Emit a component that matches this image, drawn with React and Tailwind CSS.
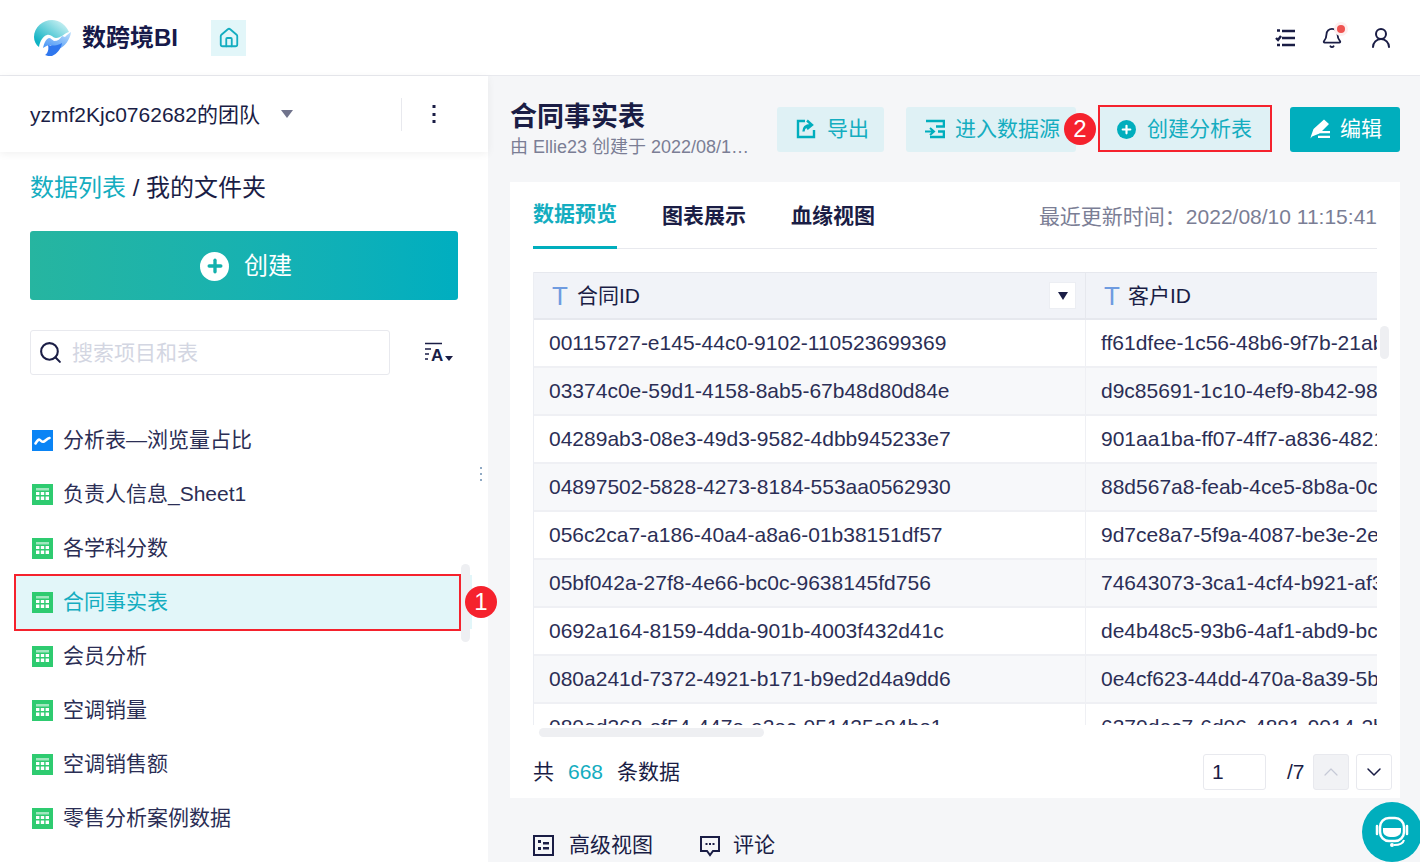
import React from "react";
import { Home, Bell, UserRound, Search, Plus, ChevronUp, ChevronDown } from "lucide-react";

const files = [
  { name: "分析表—浏览量占比", kind: "chart" },
  { name: "负责人信息_Sheet1" },
  { name: "各学科分数" },
  { name: "合同事实表", active: true },
  { name: "会员分析" },
  { name: "空调销量" },
  { name: "空调销售额" },
  { name: "零售分析案例数据" },
];

const rows = [
  ["00115727-e145-44c0-9102-110523699369", "ff61dfee-1c56-48b6-9f7b-21ab3c0e7d11"],
  ["03374c0e-59d1-4158-8ab5-67b48d80d84e", "d9c85691-1c10-4ef9-8b42-98a1c2e4f760"],
  ["04289ab3-08e3-49d3-9582-4dbb945233e7", "901aa1ba-ff07-4ff7-a836-4821d7c0be55"],
  ["04897502-5828-4273-8184-553aa0562930", "88d567a8-feab-4ce5-8b8a-0c6e13f2a9d4"],
  ["056c2ca7-a186-40a4-a8a6-01b38151df57", "9d7ce8a7-5f9a-4087-be3e-2e90b4a1c673"],
  ["05bf042a-27f8-4e66-bc0c-9638145fd756", "74643073-3ca1-4cf4-b921-af3d58e0c217"],
  ["0692a164-8159-4dda-901b-4003f432d41c", "de4b48c5-93b6-4af1-abd9-bc07e26f1a38"],
  ["080a241d-7372-4921-b171-b9ed2d4a9dd6", "0e4cf623-44dd-470a-8a39-5b1f7d92c6e0"],
  ["080ed368-ef54-447e-a2ec-051425c84be1", "6370dec7-6d06-4881-9014-2b8ea5c3d174"],
];

function Logo() {
  return (
    <svg width="40" height="38" viewBox="0 0 40 38" className="shrink-0">
      <defs>
        <linearGradient id="ball" x1="0.85" y1="0" x2="0.1" y2="0.8">
          <stop offset="0" stopColor="#d3f3f5" />
          <stop offset="1" stopColor="#0fb3c4" />
        </linearGradient>
        <linearGradient id="wave" x1="0.9" y1="0" x2="0.2" y2="1">
          <stop offset="0" stopColor="#b9dcfb" />
          <stop offset="1" stopColor="#4b97f6" />
        </linearGradient>
      </defs>
      <path d="M19 1C10 1 1 8 1 18c0 4 2 8 5 10 1-6 4-11 8-12 4-1 6 3 9 3 5 0 9-5 13-6C33 6 27 1 19 1Z" fill="url(#ball)" />
      <path d="M38 13c-2 1-4 3-6 5l-3-1c-2 3-4 5-8 5-2-1-3-3-5-3-3 1-5 5-6 10 3-2 5-3 8-3 1 3 4 4 8 4 6-3 11-9 12-17Z" fill="url(#wave)" />
      <path d="M15 26c4 1 9 1 14-2-1 6-5 11-10 13-3 0-5 0-7-1 3-2 4-6 3-10Z" fill="#2f77ee" />
    </svg>
  );
}

function TableIcon() {
  return (
    <svg width="21" height="21" viewBox="0 0 21 21" className="shrink-0">
      <rect width="21" height="21" fill="#2ecb70" />
      <rect x="4" y="4" width="13" height="2.5" fill="#fff" opacity="0.55" />
      <path d="M4 8h3.4v3H4zM8.8 8h3.4v3H8.8zM13.6 8H17v3h-3.4zM4 12.5h3.4V16H4zM8.8 12.5h3.4V16H8.8zM13.6 12.5H17V16h-3.4z" fill="#fff" />
    </svg>
  );
}

function ChartIcon() {
  return (
    <svg width="21" height="21" viewBox="0 0 21 21" className="shrink-0">
      <rect width="21" height="21" fill="#0a84f5" />
      <path d="M3.5 13.5c2-3 3-4.500 4.500-3.500s2 2.500 4 1.500 3-3 5.500-3.500" fill="none" stroke="#fff" strokeWidth="2.6" strokeLinecap="round" />
    </svg>
  );
}

function ActionButton({ icon, label, className }) {
  return (
    <button className={`flex h-[45px] items-center rounded-[3px] text-[21px] ${className}`}>
      {icon}
      {label}
    </button>
  );
}

function Sidebar() {
  return (
    <aside className="relative z-10 flex w-[488px] shrink-0 flex-col bg-white">
      <div className="flex h-[76px] shrink-0 items-center pl-[30px] shadow-[0_2px_8px_rgba(0,0,0,0.06)]">
        <span className="text-[21px] leading-none text-[#1a1d45]">yzmf2Kjc0762682的团队</span>
        <span className="ml-[21px] h-0 w-0 border-x-[6px] border-t-[8px] border-x-transparent border-t-[#70738c]" />
        <div className="ml-[108px] flex h-[33px] w-[66px] items-center justify-center border-l border-[#e8e9ee]">
          <svg width="4" height="18" viewBox="0 0 4 18" fill="#1a1d45">
            <rect x="0.5" y="0" width="3" height="3" />
            <rect x="0.5" y="8" width="3" height="3" />
            <rect x="0.5" y="15" width="3" height="3" />
          </svg>
        </div>
      </div>

      <div className="mt-[18px] px-[30px] text-[24px] leading-[36px] text-[#1a1d45]">
        <span className="text-[#14adc0]">数据列表</span> / 我的文件夹
      </div>

      <button className="mx-[30px] mt-[25px] flex h-[69px] w-[428px] items-center justify-center gap-[15px] rounded-[3px] bg-gradient-to-r from-[#26b5a0] to-[#00aec0] pl-[4px] pt-[1px] text-[24px] text-white">
        <span className="flex h-[29px] w-[29px] items-center justify-center rounded-full bg-white">
          <Plus size={20} strokeWidth={4} className="text-[#12b0ad]" />
        </span>
        创建
      </button>

      <div className="mt-[30px] flex items-center px-[30px]">
        <div className="flex h-[45px] w-[360px] items-center gap-[9px] rounded-[3px] border border-[#e8e9ee] pl-[7px]">
          <Search size={25} strokeWidth={2} className="text-[#1a1d45]" />
          <span className="text-[21px] text-[#d3d6e2]">搜索项目和表</span>
        </div>
        <svg width="30" height="22" viewBox="0 0 30 22" className="ml-[34px]">
          <path d="M1 1.500h17M1 7h6M1 12h4M1 17h3" stroke="#1a1d45" strokeWidth="1.6" fill="none" />
          <text x="7" y="19" fontSize="17" fontWeight="700" fill="#1a1d45" fontFamily="Liberation Sans">A</text>
          <path d="M21 14h8l-4 5z" fill="#1a1d45" />
        </svg>
      </div>

      <ul className="mt-[38px] flex flex-col">
        {files.map((f) => (
          <li
            key={f.name}
            className={`flex h-[54px] shrink-0 items-center gap-[10px] text-[21px] ${f.active ? "mx-[16px] bg-[#e2f6f9] pl-[16px] text-[#14adc0]" : "pl-[32px] text-[#2b2e55]"}`}
          >
            {f.kind === "chart" ? <ChartIcon /> : <TableIcon />}
            {f.name}
          </li>
        ))}
      </ul>

      {/* drag handle, list scrollbar, callout */}
      <div className="absolute left-[480px] top-[391px] flex flex-col gap-[4px]">
        <i className="h-[2px] w-[2px] bg-[#8fa9c4]" />
        <i className="h-[2px] w-[2px] bg-[#8fa9c4]" />
        <i className="h-[2px] w-[2px] bg-[#8fa9c4]" />
      </div>
      <div className="absolute left-[461px] top-[488px] h-[78px] w-[9px] rounded-full bg-[#eeeff2]" />
      <div className="absolute left-[14px] top-[498px] h-[57px] w-[447px] border-2 border-[#f5222d]" />
      <span className="absolute left-[465px] top-[510px] flex h-[32px] w-[32px] items-center justify-center rounded-full bg-[#f5222d] text-[24px] text-white">1</span>
    </aside>
  );
}

function DataTable() {
  return (
    <div className="relative mt-[23px] w-[844px] shrink-0">
      <div className="h-[453px] overflow-hidden">
        <div className="w-[1104px] border-l border-[#eceef3]">
          <div className="flex h-[48px] border-y border-b-2 border-[#e6e8ee] bg-[#f1f3f8] text-[21px] text-[#1a1d45]">
            <div className="flex w-[552px] items-center border-r border-[#e6e8ee] pl-[18px] pr-[9px]">
              <span className="w-[25px] text-[26px] leading-none text-[#6f9be0]">T</span>
              <span className="flex-1">合同ID</span>
              <span className="flex h-[27px] w-[27px] items-center justify-center border border-[#eceef3] bg-white">
                <span className="h-0 w-0 border-x-[5px] border-t-[8px] border-x-transparent border-t-[#1a1d45]" />
              </span>
            </div>
            <div className="flex flex-1 items-center pl-[18px]">
              <span className="w-[24px] text-[26px] leading-none text-[#6f9be0]">T</span>
              <span>客户ID</span>
            </div>
          </div>
          {rows.map((r, i) => (
            <div key={r[0]} className={`flex h-[48px] border-b-2 border-[#eff0f4] text-[21px] text-[#2b2e55] ${i % 2 ? "bg-[#f7f8fa]" : "bg-white"}`}>
              <div className="flex w-[552px] items-center border-r border-[#eff0f4] pl-[15px]">{r[0]}</div>
              <div className="flex flex-1 items-center overflow-hidden whitespace-nowrap pl-[15px]">{r[1]}</div>
            </div>
          ))}
        </div>
      </div>
      <div className="ml-[6px] mt-[3px] h-[9px] w-[225px] rounded-full bg-[#eeeff2]" />
      <div className="absolute left-[847px] top-[54px] h-[33px] w-[9px] rounded-full bg-[#eeeff2]" />
    </div>
  );
}

function Main() {
  return (
    <main className="relative flex min-w-0 flex-1 flex-col bg-[#f5f6f8] pl-[22px] pr-[20px]">
      <div className="flex h-[106px] shrink-0 items-center">
        <div className="w-[267px] shrink-0">
          <h1 className="text-[27px] font-bold leading-[36px] text-[#1a1d45]">合同事实表</h1>
          <p className="truncate text-[18px] leading-[24px] text-[#7b7e95]">由 Ellie23 创建于 2022/08/1…</p>
        </div>
        <ActionButton
          className="w-[107px] gap-[11px] bg-[#dff1f5] pl-[19px] text-[#14adc0]"
          label="导出"
          icon={
            <svg width="20" height="20" viewBox="0 0 20 20" fill="none" stroke="#00aebd" strokeWidth="2.4">
              <path d="M9 2H2v16h16v-7" />
              <path d="M7.500 12.500c0-4 2.500-6 7-6.500M11 1.500l5 4.500-5 4" />
            </svg>
          }
        />
        <ActionButton
          className="ml-[22px] w-[170px] gap-[10px] bg-[#dff1f5] pl-[19px] text-[#14adc0]"
          label="进入数据源"
          icon={
            <svg width="20" height="20" viewBox="0 0 20 20" fill="none" stroke="#00aebd" strokeWidth="2.600">
              <path d="M1 2h18v5.500h-8M13 12.500h6V18H5M13 7.500h6" />
              <path d="M0 12.500h8M5 9l4 3.500L5 16" strokeWidth="2" />
            </svg>
          }
        />
        <ActionButton
          className="ml-[24px] w-[170px] gap-[11px] bg-[#dff1f5] pl-[17px] text-[#14adc0]"
          label="创建分析表"
          icon={
            <span className="flex h-[19px] w-[19px] items-center justify-center rounded-full bg-[#00aebd]">
              <Plus size={13} strokeWidth={4} className="text-white" />
            </span>
          }
        />
        <ActionButton
          className="ml-[20px] w-[110px] gap-[10px] bg-[#00aebd] pl-[20px] text-white"
          label="编辑"
          icon={
            <svg width="20" height="20" viewBox="0 0 20 20" fill="#fff">
              <path d="M14 0.500 19 5 9.500 14.500 2 17.500l-1.500 2 0.500-2.500 2.500-7z" />
              <path d="M10 12h10v2.200H10zM8 16.800h12V19H8z" />
            </svg>
          }
        />
      </div>

      <section className="flex h-[616px] shrink-0 flex-col bg-white px-[23px]">
        <div className="flex h-[67px] shrink-0 border-b border-[#e8e9ee]">
          <div className="flex h-[67px] w-[84px] items-center justify-center border-b-[3px] border-[#00aebd] text-[21px] font-bold text-[#14adc0]">数据预览</div>
          <div className="ml-[45px] flex h-[67px] items-center text-[21px] font-bold text-[#1a1d45]">图表展示</div>
          <div className="ml-[45px] flex h-[67px] items-center text-[21px] font-bold text-[#1a1d45]">血缘视图</div>
          <div className="ml-auto flex h-[70px] items-center text-[21px] text-[#7b7e95]">最近更新时间：2022/08/10 11:15:41</div>
        </div>

        <DataTable />

        <div className="flex flex-1 items-center pt-[8px] text-[21px] text-[#1a1d45]">
          <span>共</span>
          <span className="ml-[14px] text-[#14adc0]">668</span>
          <span className="ml-[14px]">条数据</span>
          <div className="-mr-[15px] ml-auto flex items-center">
            <span className="flex h-[36px] w-[63px] items-center rounded-[3px] border border-[#e8e9ee] pl-[8px]">1</span>
            <span className="ml-[21px] w-[26px]">/7</span>
            <span className="flex h-[36px] w-[36px] items-center justify-center rounded-[3px] border border-[#e8e9ee] bg-[#f1f2f5]">
              <ChevronUp size={24} strokeWidth={1.2} className="text-[#c6c9d6]" />
            </span>
            <span className="ml-[7px] flex h-[36px] w-[36px] items-center justify-center rounded-[3px] border border-[#e8e9ee]">
              <ChevronDown size={24} strokeWidth={1.5} className="text-[#1a1d45]" />
            </span>
          </div>
        </div>
      </section>

      <div className="relative flex flex-1 items-start pl-[23px] pt-[33px] text-[21px] text-[#1a1d45]">
        <svg width="21" height="21" viewBox="0 0 21 21" className="mr-[15px] mt-[4px]" fill="none">
          <rect x="1" y="1" width="19" height="19" stroke="#1a1d45" strokeWidth="2" />
          <path d="M5 5h3v3H5zM5 12h3v3H5zM10 7h6v2.500h-6zM10 12h6v2.500h-6z" fill="#1a1d45" />
        </svg>
        <span className="leading-[28px]">高级视图</span>
        <svg width="22" height="22" viewBox="0 0 22 22" className="ml-[46px] mr-[12px] mt-[4px]" fill="none">
          <path d="M2 2h18v14h-6l-3 4-3-4H2z" stroke="#1a1d45" strokeWidth="2" />
          <path d="M6.500 8h2v2h-2zM10 8h2v2h-2zM13.500 8h2v2h-2z" fill="#1a1d45" />
        </svg>
        <span className="leading-[28px]">评论</span>
        <span className="ml-auto mr-[2px] leading-[28px] text-[#14adc0]">展</span>
      </div>

      {/* callout on the toolbar, help bubble */}
      <div className="absolute left-[610px] top-[29px] h-[47px] w-[174px] border-2 border-[#f5222d]" />
      <span className="absolute left-[576px] top-[37px] flex h-[32px] w-[32px] items-center justify-center rounded-full bg-[#f5222d] text-[24px] text-white">2</span>
      <span className="absolute left-[874px] top-[726px] flex h-[60px] w-[60px] items-center justify-center rounded-full bg-[#00aebd]">
        <svg width="36" height="36" viewBox="0 0 36 36" fill="none">
          <rect x="6" y="4" width="24" height="23" rx="9" stroke="#fff" strokeWidth="2.500" />
          <path d="M9 14h18v3c0 4-4 6-9 6s-9-2-9-6z" fill="#fff" />
          <path d="M3 12v8M33 12v8" stroke="#fff" strokeWidth="2.500" strokeLinecap="round" />
          <path d="M30 26c-1 4-5 5-10 5" stroke="#fff" strokeWidth="2" />
          <circle cx="18" cy="31" r="2" fill="#fff" />
        </svg>
      </span>
    </main>
  );
}

export default function App() {
  return (
    <div className="flex h-[862px] w-[1420px] flex-col overflow-hidden bg-white font-['Liberation_Sans','Noto_Sans_CJK_SC',sans-serif]">
      <header className="flex h-[76px] shrink-0 items-center border-b border-[#e8e9ee] pl-[33px] pr-[27px]">
        <Logo />
        <span className="ml-[9px] text-[24px] font-bold text-[#171a4a]">数跨境BI</span>
        <span className="ml-[33px] flex h-[36px] w-[35px] items-center justify-center bg-[#e2f6f9]">
          <Home size={22} strokeWidth={2} className="text-[#14adc0]" />
        </span>
        <div className="ml-auto flex items-center gap-[26px]">
          <svg width="20" height="20" viewBox="0 0 20 20" fill="none" stroke="#1a1d45" strokeWidth="2.400">
            <path d="M7 3h13M7 10h13M7 17h13M2 2.500h3M1 10l2 2 3-4M2 17h3" />
          </svg>
          <span className="relative">
            <Bell size={22} strokeWidth={2} className="text-[#1a1d45]" />
            <i className="absolute -right-[5px] -top-[5px] h-[14px] w-[14px] rounded-full bg-[#fdeeee]" />
            <i className="absolute -right-[2px] -top-[2px] h-[8px] w-[8px] rounded-full bg-[#ef5350]" />
          </span>
          <UserRound size={24} strokeWidth={2} className="text-[#1a1d45]" />
        </div>
      </header>
      <div className="flex min-h-0 flex-1">
        <Sidebar />
        <Main />
      </div>
    </div>
  );
}
